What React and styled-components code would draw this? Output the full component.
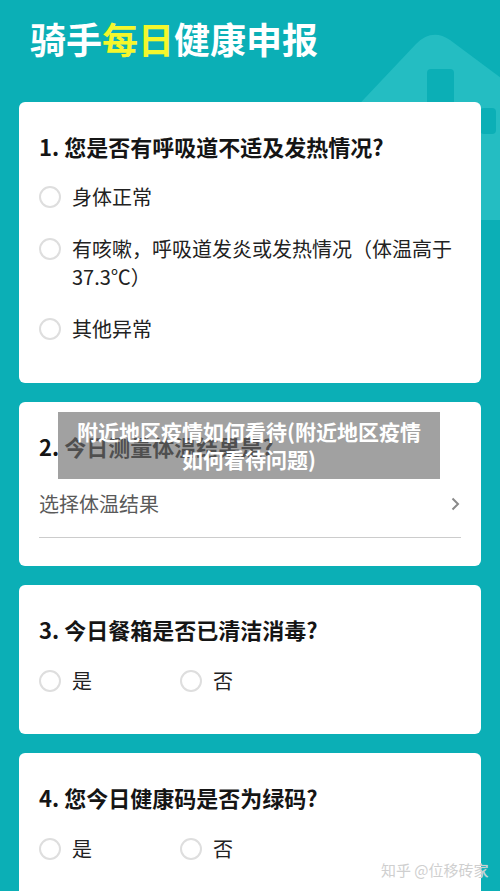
import styled, { createGlobalStyle } from "styled-components";

const GlobalStyle = createGlobalStyle`
    html, body {
        margin: 0;
        padding: 0;
        background: #0bafb6;
        font-family: "Noto Sans CJK SC", "Noto Sans", sans-serif;
    }
    body {
        height: 891px;
        overflow: hidden;
    }
`;

const questions = [
    {
        no: 1,
        title: "您是否有呼吸道不适及发热情况?",
        type: "list",
        options: ["身体正常", "有咳嗽，呼吸道发炎或发热情况（体温高于37.3℃）", "其他异常"],
    },
    {
        no: 2,
        title: "今日测量体温结果是?",
        type: "select",
        placeholder: "选择体温结果",
    },
    {
        no: 3,
        title: "今日餐箱是否已清洁消毒?",
        type: "inline",
        options: ["是", "否"],
    },
    {
        no: 4,
        title: "您今日健康码是否为绿码?",
        type: "inline",
        options: ["是", "否"],
    },
];

// bottom padding differs a little per kind of question
const bottomPad = {
    list: 40,
    select: 28,
    inline: 39,
};

const Chevron = () => (
    <svg width="9" height="14" viewBox="0 0 9 14">
        <path d="M1.5 1.5 L7 7 L1.5 12.5" fill="none" stroke="#8a8a8a" strokeWidth="2" />
    </svg>
);

const HouseDecor = () => (
    <Decor width="160" height="200" viewBox="340 20 160 200">
        <path
            d="M 330 135 L 416 44 Q 432 28 450 40 L 520 92 L 520 220 L 330 220 Z"
            fill="#24bdc2"
        />
        <rect x="427" y="69" width="27" height="60" rx="4" fill="#0bafb6" />
        <rect x="480" y="108" width="16" height="26" rx="4" fill="#0bafb6" />
    </Decor>
);

const Option = ({ label }) => (
    <OptionRow>
        <Radio />
        <OptionLabel>{label}</OptionLabel>
    </OptionRow>
);

const Card = ({ q, children }) => (
    <CardBox $pad={bottomPad[q.type]}>
        <QuestionTitle>{q.no}. {q.title}</QuestionTitle>
        {q.type === "list" && (
            <OptionList>
                {q.options.map(o => <Option key={o} label={o} />)}
            </OptionList>
        )}
        {q.type === "inline" && (
            <OptionInline>
                {q.options.map(o => <Option key={o} label={o} />)}
            </OptionInline>
        )}
        {q.type === "select" && (
            <SelectRow>
                <Placeholder>{q.placeholder}</Placeholder>
                <Chevron />
            </SelectRow>
        )}
        {children}
    </CardBox>
);

const App = () => {
    return (
        <Page>
            <GlobalStyle />
            <HouseDecor />
            <Header>
                骑手<Highlight>每日</Highlight>健康申报
            </Header>
            <Cards>
                {questions.map(q => (
                    <Card key={q.no} q={q}>
                        {q.no === 2 && (
                            <Caption>
                                附近地区疫情如何看待(附近地区疫情<br />如何看待问题)
                            </Caption>
                        )}
                    </Card>
                ))}
            </Cards>
            <Watermark>知乎 @位移砖家</Watermark>
        </Page>
    );
};

export default App;

const Page = styled.div`
    position: relative;
    width: 500px;
    height: 891px;
    padding: 0 19px;
    box-sizing: border-box;
    overflow: hidden;
`;

const Decor = styled.svg`
    position: absolute;
    top: 20px;
    left: 340px;
`;

const Header = styled.h1`
    position: relative;
    margin: 0;
    padding: 16px 0 0 11px;
    height: 102px;
    box-sizing: border-box;
    font-size: 36px;
    line-height: 44px;
    font-weight: 700;
    color: #ffffff;
`;

const Highlight = styled.span`
    color: #f4f72c;
`;

const Cards = styled.div`
    position: relative;
    display: flex;
    flex-direction: column;
    gap: 19px;
`;

const CardBox = styled.div`
    position: relative;
    background: #ffffff;
    border-radius: 6px;
    padding: 28px 20px ${props => props.$pad}px;
`;

const QuestionTitle = styled.div`
    font-size: 22px;
    line-height: 32px;
    font-weight: 700;
    color: #151515;
`;

const OptionList = styled.div`
    display: flex;
    flex-direction: column;
    gap: 24px;
    margin-top: 21px;
`;

const OptionInline = styled.div`
    display: grid;
    grid-template-columns: 141px 141px;
    margin-top: 22px;
`;

const OptionRow = styled.div`
    display: flex;
    align-items: flex-start;
    gap: 11px;
`;

const Radio = styled.span`
    flex: none;
    width: 22px;
    height: 22px;
    margin-top: 3px;
    box-sizing: border-box;
    border: 2px solid #dedede;
    border-radius: 50%;
    background: #ffffff;
`;

const OptionLabel = styled.span`
    font-size: 20px;
    line-height: 28px;
    color: #222222;
`;

const SelectRow = styled.div`
    display: flex;
    align-items: center;
    justify-content: space-between;
    margin-top: 28px;
    padding: 0 1px 19px 0;
    border-bottom: 1.5px solid #cccccc;
`;

const Placeholder = styled.span`
    font-size: 20px;
    line-height: 28px;
    color: #5a5a5a;
`;

const Caption = styled.div`
    position: absolute;
    top: 10px;
    left: 39px;
    width: 382px;
    height: 67px;
    box-sizing: border-box;
    padding-top: 5px;
    background: rgba(110, 110, 110, 0.65);
    color: #ffffff;
    font-size: 21px;
    line-height: 28px;
    font-weight: 700;
    text-align: center;
    white-space: nowrap;
`;

const Watermark = styled.div`
    position: absolute;
    left: 381px;
    top: 858px;
    font-size: 15px;
    line-height: 24px;
    color: #cfcfcf;
    text-shadow: 0 0 1px rgba(255, 255, 255, 0.8);
    white-space: nowrap;
`;
